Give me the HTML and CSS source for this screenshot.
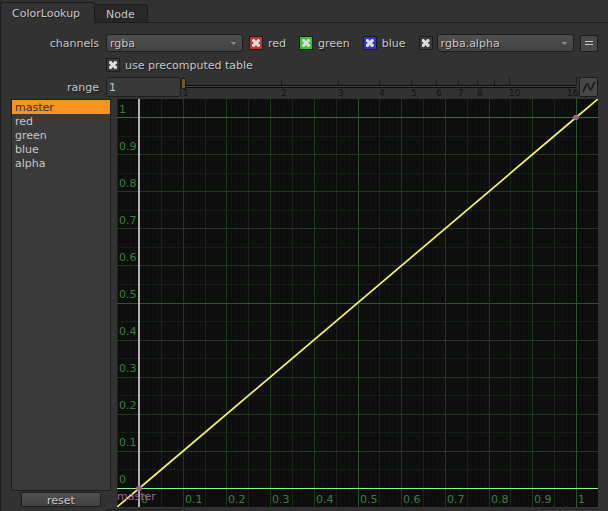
FILE: index.html
```
<!DOCTYPE html>
<html lang="en">
<head>
<meta charset="utf-8">
<title>ColorLookup</title>
<link rel="stylesheet" href="styles.css">
</head>
<body>
<div class="panel">
  <nav class="tabs">
    <button class="tab tab-active">ColorLookup</button>
    <button class="tab">Node</button>
  </nav>
  <main class="content">
    <div class="row channels">
      <label class="name" for="channels">channels</label>
      <select id="channels" class="combo"><option>rgba</option></select>
      <label class="check"><input type="checkbox" class="red" checked><span>red</span></label>
      <label class="check"><input type="checkbox" class="green" checked><span>green</span></label>
      <label class="check"><input type="checkbox" class="blue" checked><span>blue</span></label>
      <input type="checkbox" class="alpha" aria-label="alpha" checked>
      <select class="combo" aria-label="alpha channel"><option>rgba.alpha</option></select>
      <button class="equals" aria-label="expression"><svg width="10" height="6" viewBox="0 0 10 6"><path d="M1 1.5H9M1 4.5H9" stroke="#c8c8c8"/></svg></button>
    </div>
    <div class="row precomputed">
      <label class="check"><input type="checkbox" checked><span>use precomputed table</span></label>
    </div>
    <div class="row range">
      <label class="name" for="range">range</label>
      <input id="range" class="number" type="text" value="1">
      <div class="scale">
        <svg class="ruler" id="ruler" aria-hidden="true"></svg>
        <input class="slider" type="range" min="1" max="16" value="1" aria-label="range slider">
      </div>
      <button class="curve" aria-label="animation"><svg width="16" height="16" viewBox="0 0 16 16"><path d="M1.5 13C3.5 12.5 4 5.500 6 5C8 4.800 7.500 11 9.500 10.800C12 10.500 11.500 3.500 14.500 3" fill="none" stroke="#191919" stroke-width="1.6"/></svg></button>
    </div>
    <div class="editor">
      <div class="side">
        <ul class="curves">
          <li class="selected">master</li><li>red</li><li>green</li><li>blue</li><li>alpha</li>
        </ul>
        <button class="reset">reset</button>
      </div>
      <svg class="graph" id="graph" viewBox="0 0 481 408" preserveAspectRatio="none" role="img" aria-label="Lookup curve"></svg>
    </div>
    <div class="next-row"><span class="next-field"></span><span class="next-track"></span><span class="next-buttons"><i></i><i></i><i></i></span></div>
  </main>
</div>
<script src="graph.js"></script>
</body>
</html>
```
FILE: styles.css
```
* { box-sizing: border-box; }
body {
  margin: 0;
  background: #323232;
  color: #c8c8c8;
  font: 11px/14px "DejaVu Sans", sans-serif;
}
button, input, select { font: inherit; color: inherit; margin: 0; }
.panel { height: 100vh; display: flex; flex-direction: column; overflow: hidden; }
.tabs { display: flex; align-items: flex-end; height: 23px; flex: none; border-bottom: 1px solid #1e1e1e; }
.tab {
  height: 19px;
  padding: 2px 12px 0 11px;
  margin-bottom: -1px;
  border: 1px solid #1c1c1c;
  border-left: 0;
  border-radius: 0 3px 0 0;
  background: #282828;
  text-shadow: 1px 1px #1c1c1c;
}
.tab-active { height: 21px; padding: 2px 14px 0 11px; border-left: 1px solid #1c1c1c; border-bottom-color: #323232; border-radius: 3px 3px 0 0; background: #323232; }
.content { flex: 1; min-height: 0; display: flex; flex-direction: column; padding: 0 10px 0 11px; border-left: 1px solid #1e1e1e; }
.row { display: flex; align-items: center; flex: none; text-shadow: 1px 1px #1c1c1c; }
.name { width: 87px; margin-right: 7px; padding-top: 2px; text-align: right; flex: none; }
.channels { height: 20px; margin-top: 10px; }
.combo {
  appearance: none;
  width: 137px;
  height: 18px;
  flex: none;
  margin-right: 6px;
  padding: 2px 3px 0;
  border: 1px solid #1c1c1c;
  border-radius: 3px;
  background: linear-gradient(#888, #888) 124px 7px / 5px 1px no-repeat,
    linear-gradient(#888, #888) 125px 8px / 3px 1px no-repeat,
    linear-gradient(#888, #888) 126px 9px / 1px 1px no-repeat,
    linear-gradient(#4f4f4f, #424242);
  text-shadow: 1px 1px #222;
}
.check { display: flex; align-items: center; gap: 5px; margin-right: 13px; }
.check span { padding-top: 2px; }
input[type="checkbox"] {
  appearance: none;
  width: 14px;
  height: 14px;
  flex: none;
  display: grid;
  place-items: center;
  border: 1px solid #1c1c1c;
  background: #3a3a3a;
}
input[type="checkbox"]:checked::before {
  content: "";
  width: 8px;
  height: 8px;
  background: #dcdcdc;
  clip-path: polygon(12% 0, 30% 0, 50% 25%, 70% 0, 88% 0, 100% 12%, 100% 30%, 75% 50%, 100% 70%, 100% 88%, 88% 100%, 70% 100%, 50% 75%, 30% 100%, 12% 100%, 0 88%, 0 70%, 25% 50%, 0 30%, 0 12%);
}
input[type="checkbox"].red { background: #c83232; }
input[type="checkbox"].green { background: #32c832; }
input[type="checkbox"].blue { background: #3232c8; }
input[type="checkbox"].alpha { margin-right: 4px; }
.equals { display: grid; place-items: center; width: 18px; height: 17px; margin-left: auto; padding: 0; border: 1px solid #1c1c1c; border-radius: 2px; background: #484848; }
.precomputed { height: 22px; padding-left: 94px; margin-top: 1px; }
.range { height: 22px; }
.number { width: 75px; height: 20px; padding: 0 2px; border: 1px solid #1e1e1e; border-radius: 3px; background: #393939; }
.scale { position: relative; flex: 1; min-width: 0; height: 22px; }
.ruler { display: block; width: 100%; height: 22px; overflow: visible; text-shadow: none; }
.slider { position: absolute; inset: 0; width: 100%; height: 14px; appearance: none; background: none; }
.slider::-webkit-slider-thumb { appearance: none; width: 5px; height: 11px; border: 1px solid #1c1c1c; background: #6f5b26; }
.curve { width: 19px; height: 20px; padding: 0; display: grid; place-items: center; border: 1px solid #1c1c1c; border-radius: 2px; background: #484848; }
.editor { flex: 1; min-height: 0; display: flex; gap: 6px; margin-top: 1px; }
.side { width: 100px; margin-left: -1px; display: flex; flex-direction: column; flex: none; }
.curves { flex: 1; list-style: none; margin: 0; padding: 0; border: 1px solid #1e1e1e; background: #3a3a3a; }
.curves li { height: 14px; padding: 0 3px; line-height: 16px; }
.curves .selected { background: #f7931e; color: #323232; }
.reset { width: 80px; height: 15px; margin: 1px auto 0; padding: 1px 0 0; line-height: 13px; border: 1px solid #1c1c1c; border-radius: 2px; background: linear-gradient(#505050, #424242); text-shadow: 1px 1px #222; }
.graph { display: block; flex: 1; min-width: 0; height: 100%; background: #0d0d0d; }
.ruler text { font-size: 9px; fill: #101010; }
.graph text { fill: #3a803a; }
.graph .curve-name { fill: #a0629a; }
.next-row { height: 4px; flex: none; display: flex; align-items: flex-end; padding-left: 94px; }
.next-field { width: 75px; height: 2px; border: 1px solid #1e1e1e; border-bottom: 0; border-radius: 3px 3px 0 0; }
.next-track { flex: 1; height: 2px; margin-left: 3px; border-left: 1px solid #1e1e1e; }
.next-buttons { display: flex; }
.next-buttons i { width: 19px; height: 2px; border: 1px solid #1e1e1e; border-bottom: 0; border-radius: 2px 2px 0 0; background: #484848; }
```
FILE: graph.js
```
const graph = document.getElementById("graph");
const ruler = document.getElementById("ruler");
const NS = "http://www.w3.org/2000/svg";

function add(parent, tag, attrs, text) {
  const el = document.createElementNS(NS, tag);
  for (const key in attrs) el.setAttribute(key, attrs[key]);
  if (text !== undefined) el.textContent = text;
  parent.appendChild(el);
}
function rect(x, y, width, height, fill) {
  add(graph, "rect", { x, y, width, height, fill });
}

// Plot area: value 0 sits at (22, 389), value 1 at (459, 18).
const px = v => Math.round(22 + v * 437);
const py = v => Math.round(389 - v * 371);

for (let i = -5; i <= 105; i++) {
  if (i % 5) rect(px(i / 100), 0, 1, 408, "#101210");
}
for (let i = -1; i <= 21; i++) {
  if (i % 2) {
    rect(px(i / 20), 0, 1, 408, "#182518");
    rect(0, py(i / 20), 481, 1, "#142014");
  }
}
for (let i = 0; i <= 10; i++) {
  const colour = i % 5 ? "#1d3a1d" : "#2d552d";
  rect(px(i / 10), 0, 1, 408, colour);
  rect(0, py(i / 10), 481, 1, i === 10 ? "#3c6c3c" : colour);
}
rect(0, 389, 481, 1, "#7cff7c");
rect(21, 0, 2, 408, "#b2b2b2");
add(graph, "path", { d: "M0 408L22 389.5L459 18.5L481 0", stroke: "#f5f55f", "stroke-width": 1.7, fill: "none" });

for (let i = 0; i <= 10; i++) {
  const label = String(i / 10);
  add(graph, "text", { x: 2, y: 384 - i * 37 }, label);
  add(graph, "text", { x: px(i / 10) + 2, y: 404 }, label);
}
add(graph, "text", { x: 0, y: 401, class: "curve-name" }, "master");
for (const [cx, cy] of [[22, 389.5], [459, 18.5]]) {
  add(graph, "circle", { cx, cy, r: 2.8, fill: "#a0629a" });
}

// Logarithmic ruler from 1 to 16.
function drawRuler() {
  ruler.replaceChildren();
  const start = 2;
  const end = ruler.clientWidth - 3;
  add(ruler, "rect", { x: 0, y: 9, width: end, height: 3, fill: "#080808" });
  add(ruler, "rect", { x: 0, y: 10, width: end, height: 1, fill: "#484848" });
  for (const v of [1, 2, 3, 4, 5, 6, 7, 8, 9, 10, 16]) {
    const x = Math.floor(start + (end - start) * Math.log(v) / Math.log(16));
    const top = v === 1 || v >= 10 ? 1 : 4;
    add(ruler, "rect", { x, y: top, width: 1, height: 9 - top, fill: "#1c1c1c" });
    if (v !== 9) {
      add(ruler, "text", { x: v === 16 ? x - 9 : x, y: 20 }, v);
    }
  }
}
drawRuler();
addEventListener("resize", drawRuler);
```
